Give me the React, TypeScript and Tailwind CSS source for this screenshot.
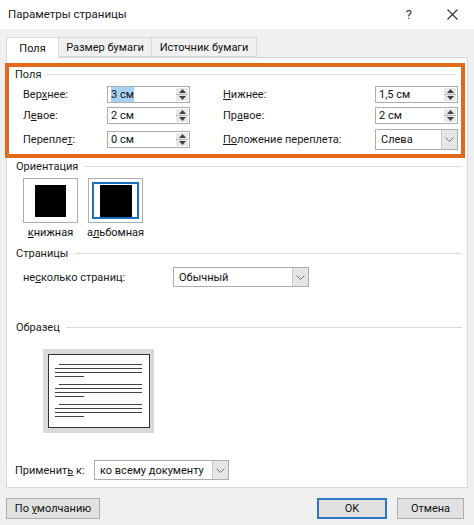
import React from "react";

function Up() {
  return (
    <svg width="7" height="4" viewBox="0 0 7 4">
      <path d="M0 4 L3.5 0 L7 4 Z" fill="#404040" />
    </svg>
  );
}
function Down() {
  return (
    <svg width="7" height="4" viewBox="0 0 7 4">
      <path d="M0 0 L3.5 4 L7 0 Z" fill="#404040" />
    </svg>
  );
}
function Chevron() {
  return (
    <svg width="9" height="5" viewBox="0 0 9 5">
      <path d="M0.5 0.5 L4.5 4.5 L8.5 0.5" fill="none" stroke="#707070" strokeWidth="1" />
    </svg>
  );
}

function Spin({ value, selected }: { value: string; selected?: boolean }) {
  return (
    <div className="flex h-[17px] w-[83px] border border-[#adadad] bg-white">
      <div className="flex flex-1 items-center whitespace-nowrap pl-[3px] text-[11px] leading-none text-[#111]">
        {selected ? <span className="bg-[#a8d1f3] py-[2px]">{value}</span> : <span>{value}</span>}
      </div>
      <div className="my-[1px] mr-[1px] flex w-[12px] flex-col bg-[#e8e8e8]">
        <div className="flex flex-1 items-center justify-center border-b border-[#b8b8b8]">
          <Up />
        </div>
        <div className="flex flex-1 items-center justify-center">
          <Down />
        </div>
      </div>
    </div>
  );
}

function Select({ value, w, h = 20 }: { value: string; w: string; h?: number }) {
  return (
    <div className={`flex ${w} ${h === 20 ? "h-[20px]" : "h-[21px]"} border border-[#adadad] bg-white`}>
      <div className="flex flex-1 items-center whitespace-nowrap pl-[5px] text-[11px] leading-none text-[#111]">
        <span>{value}</span>
      </div>
      <div className="flex w-[16px] items-center justify-center border-l border-[#c8c8c8] bg-[#e6e6e6]">
        <Chevron />
      </div>
    </div>
  );
}

function Group({ title, pl = "pl-[9px]" }: { title: string; pl?: string }) {
  return (
    <div className={`flex h-[14px] items-center ${pl}`}>
      <span className="whitespace-nowrap text-[11px] leading-none text-[#1a1a1a]">{title}</span>
      <div className="ml-[6px] mr-[5px] h-px flex-1 bg-[#dcdcdc]" />
    </div>
  );
}

function Label({ children, w }: { children: React.ReactNode; w: string }) {
  return <div className={`${w} whitespace-nowrap text-[11px] leading-none text-[#1a1a1a]`}>{children}</div>;
}

export default function App() {
  return (
    <div className="flex h-[525px] w-[474px] flex-col overflow-hidden bg-[#f0f0f0] font-['Roboto',sans-serif] text-[#111]">
      {/* title bar */}
      <div className="flex h-[29px] items-center bg-white pl-[8px]">
        <span className="whitespace-nowrap text-[11.5px] text-[#1a1a1a]">Параметры страницы</span>
        <div className="flex-1" />
        <span className="mr-[35px] text-[13px] text-[#333]">?</span>
        <svg width="11" height="11" viewBox="0 0 11 11" className="mr-[16px]">
          <path d="M0.5 0.5 L10.5 10.5 M10.5 0.5 L0.5 10.5" stroke="#333" strokeWidth="1.1" />
        </svg>
      </div>

      {/* tabs */}
      <div className="mt-[8px] flex h-[20px] pl-[6px]">
        <div className="relative z-10 flex h-[21px] w-[53px] items-center justify-center border border-b-0 border-[#d9d9d9] bg-white text-[11px] leading-none">
          <span>Поля</span>
        </div>
        <div className="flex h-[20px] w-[93px] items-center justify-center whitespace-nowrap border border-l-0 border-[#d9d9d9] text-[11px] leading-none">
          <span>Размер бумаги</span>
        </div>
        <div className="flex h-[20px] w-[105px] items-center justify-center whitespace-nowrap border border-l-0 border-[#d9d9d9] text-[11px] leading-none">
          <span>Источник бумаги</span>
        </div>
      </div>

      {/* panel */}
      <div className="mx-[6px] flex h-[431px] flex-col border border-[#d9d9d9] bg-white">
        {/* highlighted margins group */}
        <div className="-ml-[2px] mt-[5px] w-[460px] border-4 border-[#e2691c] pb-[4px]">
          <Group title="Поля" pl="pl-[6px]" />
          <div className="mt-[5px] flex flex-col gap-[4px] pl-[14px]">
            <div className="flex h-[17px] items-center">
              <Label w="w-[84px]">
                Вер<u>х</u>нее:
              </Label>
              <Spin value="3 см" selected />
              <div className="w-[33px]" />
              <Label w="w-[152px]">
                <u>Н</u>ижнее:
              </Label>
              <Spin value="1,5 см" />
            </div>
            <div className="flex h-[17px] items-center">
              <Label w="w-[84px]">
                Л<u>е</u>вое:
              </Label>
              <Spin value="2 см" />
              <div className="w-[33px]" />
              <Label w="w-[152px]">
                Пр<u>а</u>вое:
              </Label>
              <Spin value="2 см" />
            </div>
            <div className="mt-[1px] flex h-[21px] items-center">
              <Label w="w-[84px]">
                Перепле<u>т</u>:
              </Label>
              <Spin value="0 см" />
              <div className="w-[33px]" />
              <Label w="w-[152px]">
                <u>По</u>ложение переплета:
              </Label>
              <Select value="Слева" w="w-[83px]" h={21} />
            </div>
          </div>
        </div>

        {/* orientation */}
        <div className="mt-[1px]">
          <Group title="Ориентация" />
        </div>
        <div className="mt-[5px] flex gap-[10px] pl-[16px]">
          <div className="flex w-[55px] flex-col items-center">
            <div className="flex h-[45px] w-[55px] items-center justify-center border border-[#adadad] bg-white">
              <div className="h-[32px] w-[31px] bg-black" />
            </div>
            <div className="mt-[4px] whitespace-nowrap text-[11px] leading-none">
              <u>к</u>нижная
            </div>
          </div>
          <div className="flex w-[55px] flex-col items-center">
            <div className="flex h-[45px] w-[55px] items-center justify-center border border-[#adadad] bg-white">
              <div className="flex h-[37px] w-[47px] items-center justify-center border-2 border-[#1a6fc0]">
                <div className="h-[32px] w-[32px] bg-black" />
              </div>
            </div>
            <div className="mt-[4px] whitespace-nowrap text-[11px] leading-none">
              а<u>л</u>ьбомная
            </div>
          </div>
        </div>

        {/* pages */}
        <div className="mt-[8px]">
          <Group title="Страницы" />
        </div>
        <div className="mt-[7px] flex items-center pl-[16px]">
          <Label w="w-[150px]">
            не<u>с</u>колько страниц:
          </Label>
          <Select value="Обычный" w="w-[136px]" />
        </div>

        {/* sample */}
        <div className="mt-[33px]">
          <Group title="Образец" />
        </div>
        <div className="ml-[36px] mt-[15px] flex h-[84px] w-[111px] items-center justify-center bg-[#d9d9d9]">
          <div className="flex h-[74px] w-[102px] flex-col border-[1.5px] border-[#333] bg-white pl-[6px] pr-[7px] pt-[9px]">
            {[0, 1, 2].map((g) => (
              <div key={g} className="mb-[7px] flex flex-col gap-[3px]">
                <div className="ml-[4px] h-px bg-[#444]" />
                <div className="h-px bg-[#444]" />
                <div className="h-px bg-[#444]" />
                <div className="h-px w-[29px] bg-[#444]" />
              </div>
            ))}
          </div>
        </div>

        {/* apply to */}
        <div className="mt-[27px] flex items-center pl-[8px]">
          <Label w="w-[79px]">
            Применит<u>ь</u> к:
          </Label>
          <Select value="ко всему документу" w="w-[135px]" />
        </div>
      </div>

      {/* buttons */}
      <div className="mt-[10px] flex pl-[6px] pr-[10px]">
        <div className="flex h-[21px] w-[94px] items-center justify-center whitespace-nowrap border border-[#adadad] bg-[#e1e1e1] text-[11px] leading-none">
          <span>
            По <u>у</u>молчанию
          </span>
        </div>
        <div className="flex-1" />
        <div className="flex h-[21px] w-[70px] items-center justify-center border-2 border-[#2b78c6] bg-[#e1e1e1] text-[11px] leading-none">
          <span>OK</span>
        </div>
        <div className="ml-[10px] flex h-[21px] w-[67px] items-center justify-center border border-[#adadad] bg-[#e1e1e1] text-[11px] leading-none">
          <span>Отмена</span>
        </div>
      </div>
    </div>
  );
}
